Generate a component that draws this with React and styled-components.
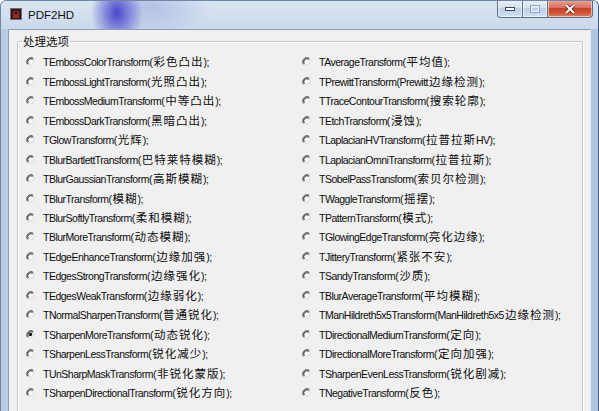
import React from "react";
import styled, { createGlobalStyle } from "styled-components";

const GlobalStyle = createGlobalStyle`
  html, body {
    margin: 0;
    padding: 0;
    background: #ffffff;
    overflow: hidden;
  }
`;

const Window = styled.div`
  width: 599px;
  height: 411px;
  box-sizing: border-box;
  display: flex;
  flex-direction: column;
  border: 1px solid #6f86a4;
  border-right-color: #3f5a7c;
  border-bottom: none;
  border-radius: 6px 6px 0 0;
  overflow: hidden;
  background: linear-gradient(90deg, #b7cce4 0%, #c8d8ea 8%, #d3e0ee 50%, #c6d7ea 92%, #adc5e0 100%);
`;

const TitleBar = styled.div`
  height: 28px;
  display: flex;
  align-items: flex-start;
  background:
    radial-gradient(ellipse 26px 34px at 116px 12px, rgba(62, 56, 200, 0.9), rgba(80, 80, 205, 0) 100%),
    radial-gradient(ellipse 60px 30px at 150px 6px, rgba(120, 130, 210, 0.35), rgba(120, 130, 210, 0) 100%),
    linear-gradient(#dae5f2, #c9d9eb);
`;

const AppIcon = styled.svg`
  margin: 7px 0 0 9px;
  flex: none;
`;

const Title = styled.div`
  margin: 8px 0 0 6px;
  font-family: "Liberation Sans", Arial, sans-serif;
  font-size: 11.5px;
  line-height: 13px;
  color: #111;
`;

const Caption = styled.div`
  margin-left: auto;
  margin-right: 5px;
  display: flex;
  height: 18px;
  margin-top: -1px;
`;

const CaptionButton = styled.div`
  width: ${(p) => p.$w}px;
  height: 18px;
  box-sizing: border-box;
  display: flex;
  align-items: center;
  justify-content: center;
  border: 1px solid #5d6f88;
  border-top: none;
  border-left: ${(p) => (p.$first ? "1px solid #5d6f88" : "none")};
  border-radius: ${(p) => (p.$first ? "0 0 0 4px" : p.$last ? "0 0 4px 0" : "0")};
  box-shadow: inset 0 0 0 1px rgba(255, 255, 255, 0.55);
  background: ${(p) =>
    p.$close
      ? "linear-gradient(#eaa598 0%, #d9705d 45%, #c7412b 50%, #cf5a3b 80%, #e08a5e 100%)"
      : "linear-gradient(#e9f0f8 0%, #d4e1ef 45%, #bccfe5 50%, #c9daed 85%, #dce8f5 100%)"};
`;

const Body = styled.div`
  flex: 1;
  display: flex;
  padding: 0 7px;
  min-height: 0;
`;

const Client = styled.div`
  flex: 1;
  display: flex;
  flex-direction: column;
  background: #f0f0f0;
  border-top: 1px solid #8d9db3;
  border-left: 1px solid #8d9db3;
  border-right: 1px solid #e4ebf3;
  overflow: hidden;
`;

const Group = styled.fieldset`
  margin: 4px 7px 0 8px;
  padding: 0;
  min-width: 0;
  flex: 1;
  border: 1px solid #c2c8cf;
  border-radius: 2px;
  box-shadow: inset 1px 1px 0 #ffffff, 1px 1px 0 #ffffff;
`;

const Legend = styled.legend`
  margin-left: 4px;
  padding: 0 1px;
  font-family: "Noto Sans CJK SC", "Liberation Sans", sans-serif;
  font-size: 11.5px;
  line-height: 15px;
  color: #111;
`;

const Options = styled.div`
  display: grid;
  grid-template-columns: 276px 1fr;
  grid-template-rows: repeat(18, 19.47px);
  grid-auto-flow: column;
  padding: 3px 0 20px 8px;
`;

const Row = styled.label`
  display: flex;
  align-items: center;
  gap: 8px;
  white-space: nowrap;
`;

const Label = styled.span`
  font-family: "Liberation Sans", Arial, sans-serif;
  font-size: 10.5px;
  letter-spacing: -0.5px;
  color: #0c0c0c;
  line-height: 14px;
`;

const Cjk = styled.span`
  font-family: "Noto Sans CJK SC", sans-serif;
  font-size: 11.5px;
  letter-spacing: 1px;
  margin: 0 0 0 1px;
`;

const left = [
  "TEmbossColorTransform(彩色凸出);",
  "TEmbossLightTransform(光照凸出);",
  "TEmbossMediumTransform(中等凸出);",
  "TEmbossDarkTransform(黑暗凸出);",
  "TGlowTransform(光辉);",
  "TBlurBartlettTransform(巴特莱特模糊);",
  "TBlurGaussianTransform(高斯模糊);",
  "TBlurTransform(模糊);",
  "TBlurSoftlyTransform(柔和模糊);",
  "TBlurMoreTransform(动态模糊);",
  "TEdgeEnhanceTransform(边缘加强);",
  "TEdgesStrongTransform(边缘强化);",
  "TEdgesWeakTransform(边缘弱化);",
  "TNormalSharpenTransform(普通锐化);",
  "TSharpenMoreTransform(动态锐化);",
  "TSharpenLessTransform(锐化减少);",
  "TUnSharpMaskTransform(非锐化蒙版);",
  "TSharpenDirectionalTransform(锐化方向);",
];

const right = [
  "TAverageTransform(平均值);",
  "TPrewittTransform(Prewitt边缘检测);",
  "TTraceContourTransform(搜索轮廓);",
  "TEtchTransform(浸蚀);",
  "TLaplacianHVTransform(拉普拉斯HV);",
  "TLaplacianOmniTransform(拉普拉斯);",
  "TSobelPassTransform(索贝尔检测);",
  "TWaggleTransform(摇摆);",
  "TPatternTransform(模式);",
  "TGlowingEdgeTransform(亮化边缘);",
  "TJitteryTransform(紧张不安);",
  "TSandyTransform(沙质);",
  "TBlurAverageTransform(平均模糊);",
  "TManHildreth5x5Transform(ManHildreth5x5边缘检测);",
  "TDirectionalMediumTransform(定向);",
  "TDirectionalMoreTransform(定向加强);",
  "TSharpenEvenLessTransform(锐化剧减);",
  "TNegativeTransform(反色);",
];

function Radio({ checked }) {
  return (
    <svg width="9" height="9" viewBox="0 0 9 9" style={{ flex: "none" }}>
      <circle cx="4.5" cy="4.5" r="4" fill="#f7f7f7" />
      <path d="M7.3 1.7 A4 4 0 0 0 1.7 7.3" fill="none" stroke="#6a6a6a" strokeWidth="1.2" />
      <path d="M6.6 2.4 A3 3 0 0 0 2.4 6.6" fill="none" stroke="#2a2a2a" strokeWidth="0.9" />
      <path d="M1.7 7.3 A4 4 0 0 0 7.3 1.7" fill="none" stroke="#d6d6d6" strokeWidth="1" />
      {checked && <circle cx="4.5" cy="4.5" r="1.7" fill="#111" />}
    </svg>
  );
}

function Text({ value }) {
  const parts = value.split(/([\u4e00-\u9fff]+)/);
  return (
    <Label>
      {parts.map((p, i) => (i % 2 ? <Cjk key={i}>{p}</Cjk> : p))}
    </Label>
  );
}

export default function App() {
  const items = [...left, ...right];
  return (
    <>
      <GlobalStyle />
      <Window>
        <TitleBar>
          <AppIcon width="12" height="12" viewBox="0 0 12 12">
            <rect x="0.5" y="0.5" width="11" height="11" fill="#2b1c1c" stroke="#7a6a6a" />
            <path d="M3 10 L3 5 Q3 2.5 6 2.5 Q9 2.5 9 5 L9 10 Z" fill="#9c2a24" />
            <circle cx="6" cy="5" r="1.4" fill="#1a0f0f" />
          </AppIcon>
          <Title>PDF2HD</Title>
          <Caption>
            <CaptionButton $w={26} $first>
              <svg width="10" height="4" viewBox="0 0 10 4">
                <rect x="0.5" y="0.5" width="9" height="3" fill="#fff" stroke="#3a4a60" />
              </svg>
            </CaptionButton>
            <CaptionButton $w={25}>
              <svg width="10" height="8" viewBox="0 0 10 8">
                <rect x="0.5" y="0.5" width="9" height="7" fill="none" stroke="#8fa3bd" />
                <rect x="1.5" y="1.5" width="7" height="5" fill="none" stroke="#eef3f9" />
              </svg>
            </CaptionButton>
            <CaptionButton $w={45} $close $last>
              <svg width="12" height="10" viewBox="0 0 12 10">
                <path d="M2 1 L10 9 M10 1 L2 9" stroke="#5a1d12" strokeWidth="3.4" />
                <path d="M2 1 L10 9 M10 1 L2 9" stroke="#fff" strokeWidth="2" />
              </svg>
            </CaptionButton>
          </Caption>
        </TitleBar>
        <Body>
          <Client>
            <Group>
              <Legend>处理选项</Legend>
              <Options>
                {items.map((t) => (
                  <Row key={t}>
                    <Radio checked={t.startsWith("TSharpenMoreTransform")} />
                    <Text value={t} />
                  </Row>
                ))}
              </Options>
            </Group>
          </Client>
        </Body>
      </Window>
    </>
  );
}
